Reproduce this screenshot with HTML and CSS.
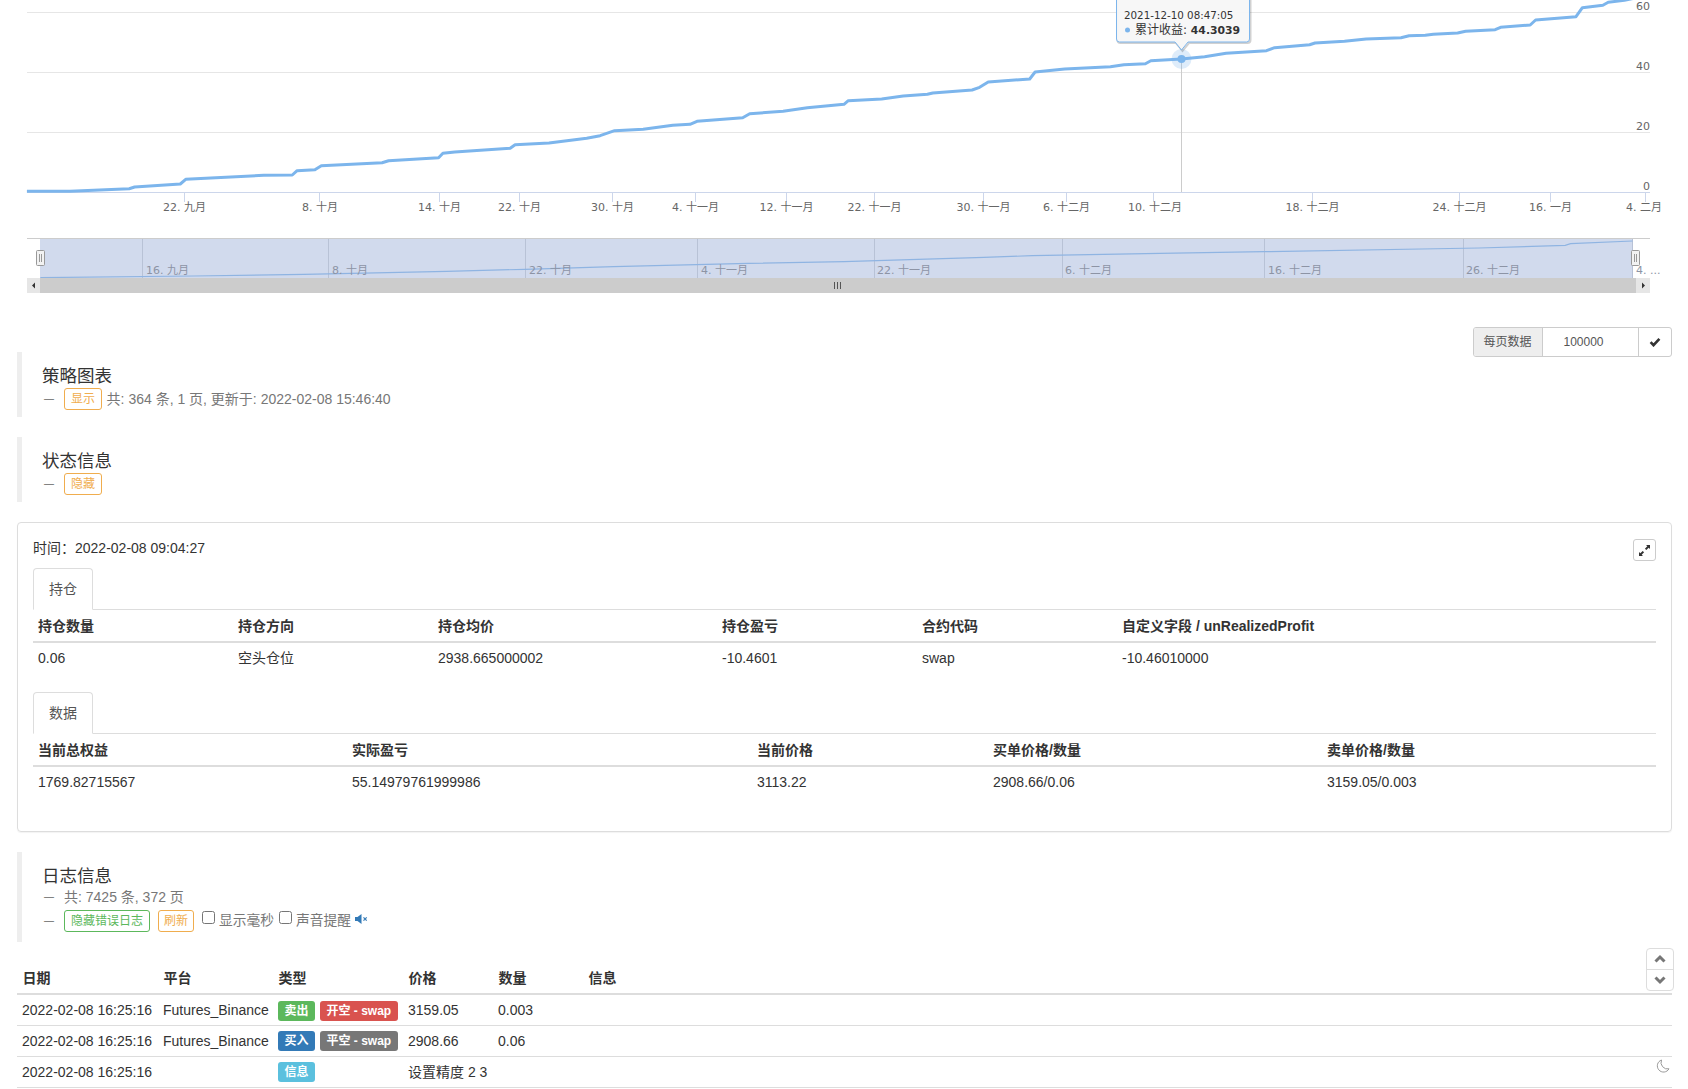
FILE: index.html
```html
<!DOCTYPE html>
<html lang="zh-CN">
<head>
<meta charset="utf-8">
<title>策略详情</title>
<link rel="stylesheet" href="styles.css">
</head>
<body>
<svg class="chart" width="1688" height="327" viewBox="0 0 1688 327" xmlns="http://www.w3.org/2000/svg">
  <g class="grid">
    <line x1="27" x2="1650" y1="12.5" y2="12.5"/>
    <line x1="27" x2="1650" y1="72.5" y2="72.5"/>
    <line x1="27" x2="1650" y1="132.5" y2="132.5"/>
  </g>
  <g class="axis">
    <line x1="27" x2="1650" y1="192.5" y2="192.5"/>
    <line x1="184.5" x2="184.5" y1="192" y2="202"/>
    <line x1="319.5" x2="319.5" y1="192" y2="202"/>
    <line x1="439.5" x2="439.5" y1="192" y2="202"/>
    <line x1="519.5" x2="519.5" y1="192" y2="202"/>
    <line x1="612.5" x2="612.5" y1="192" y2="202"/>
    <line x1="695.5" x2="695.5" y1="192" y2="202"/>
    <line x1="786.5" x2="786.5" y1="192" y2="202"/>
    <line x1="874.5" x2="874.5" y1="192" y2="202"/>
    <line x1="983.5" x2="983.5" y1="192" y2="202"/>
    <line x1="1066.5" x2="1066.5" y1="192" y2="202"/>
    <line x1="1153.5" x2="1153.5" y1="192" y2="202"/>
    <line x1="1312.5" x2="1312.5" y1="192" y2="202"/>
    <line x1="1459.5" x2="1459.5" y1="192" y2="202"/>
    <line x1="1550.5" x2="1550.5" y1="192" y2="202"/>
    <line x1="1645.5" x2="1645.5" y1="192" y2="202"/>
  </g>
  <g class="xlabels">
    <text x="184.5" y="211">22. 九月</text>
    <text x="320" y="211">8. 十月</text>
    <text x="439.5" y="211">14. 十月</text>
    <text x="519.5" y="211">22. 十月</text>
    <text x="612.5" y="211">30. 十月</text>
    <text x="695.5" y="211">4. 十一月</text>
    <text x="786.5" y="211">12. 十一月</text>
    <text x="874.5" y="211">22. 十一月</text>
    <text x="983.5" y="211">30. 十一月</text>
    <text x="1066.5" y="211">6. 十二月</text>
    <text x="1155" y="211">10. 十二月</text>
    <text x="1312.5" y="211">18. 十二月</text>
    <text x="1459.5" y="211">24. 十二月</text>
    <text x="1550.5" y="211">16. 一月</text>
    <text x="1644" y="211">4. 二月</text>
  </g>
  <g class="ylabels">
    <text x="1650" y="10">60</text>
    <text x="1650" y="70">40</text>
    <text x="1650" y="130">20</text>
    <text x="1650" y="190">0</text>
  </g>
  <line class="crosshair" x1="1181.5" x2="1181.5" y1="59" y2="192"/>
  <polyline class="series" points="26.9,191.3 70,191.3 129.2,188.7 134.6,187 180.3,184 185.7,179.3 263.7,175.3 292.3,175 297.1,170.7 314.9,169.7 321.3,165.7 382.1,162.7 388.6,160.7 438.6,157.7 442.9,153.3 454.8,152 510.2,148.3 515.1,144.7 549,143 586.7,138.3 600.1,135.7 614.6,130.7 643.2,129.3 672.8,125.3 690,124.3 697,121.3 742.7,117.7 749.7,113.7 783.1,111.3 807.3,107.7 844,104.3 848.3,100.7 881.7,99 903.2,96 927.4,94.3 932.8,93 972.1,90 979.6,87.3 988.2,82 1029.7,79 1035.1,72 1064.7,69 1110.4,66.7 1123.9,64.7 1145.4,63.7 1150.8,60.7 1181.5,59 1204.6,56.7 1226.1,53.3 1266.5,50.7 1274.6,47.7 1309.6,44.7 1315,43 1344.5,41.3 1366.1,39 1401,37.7 1409.1,35.7 1425.3,35.3 1433.3,34.3 1457.6,33 1465.6,31.3 1495.2,29.7 1500.6,27.3 1530.2,25 1535.6,20 1576,16.7 1582.4,7.7 1602.9,5.3 1608.2,2.3 1624.4,0.3 1640,-3"/>
  <circle class="halo" cx="1181.5" cy="59" r="10"/>
  <circle class="dot" cx="1181.5" cy="59" r="4"/>
  <path class="tip-shadow" d="M1116.5,-10 V39 a3,3 0 0 0 3,3 H1175 L1181.5,50 L1188,42 H1246.5 a3,3 0 0 0 3,-3 V-10 Z" transform="translate(1 1)"/>
  <path class="tip" d="M1116.5,-10 V39 a3,3 0 0 0 3,3 H1175 L1181.5,50 L1188,42 H1246.5 a3,3 0 0 0 3,-3 V-10 Z"/>
  <text class="tip-date" x="1124" y="18.5">2021-12-10 08:47:05</text>
  <circle class="tip-bullet" cx="1127.5" cy="30" r="2.5"/>
  <text class="tip-text" x="1135" y="34">累计收益: <tspan class="tip-val">44.3039</tspan></text>

  <line class="nav-edge" x1="27" x2="1650" y1="238.5" y2="238.5"/>
  <rect class="nav-mask" x="40" y="239" width="1593" height="39"/>
  <g class="nav-grid">
    <line x1="142.5" x2="142.5" y1="239" y2="278"/>
    <line x1="328.5" x2="328.5" y1="239" y2="278"/>
    <line x1="525.5" x2="525.5" y1="239" y2="278"/>
    <line x1="697.5" x2="697.5" y1="239" y2="278"/>
    <line x1="874.5" x2="874.5" y1="239" y2="278"/>
    <line x1="1062.5" x2="1062.5" y1="239" y2="278"/>
    <line x1="1264.5" x2="1264.5" y1="239" y2="278"/>
    <line x1="1463.5" x2="1463.5" y1="239" y2="278"/>
    <line x1="1632.5" x2="1632.5" y1="239" y2="278"/>
  </g>
  <polyline class="nav-series" points="40.4,277.7 193.8,276 304,274.3 446.7,271.3 524.8,269.3 613.6,266.7 748.1,263.3 844,261.7 983.9,257.3 1032.4,255.7 1145.4,253.7 1263.8,251.7 1479,248 1565.2,245.3 1570.6,243.7 1632.5,241"/>
  <g class="nav-labels">
    <text x="146" y="274">16. 九月</text>
    <text x="332" y="274">8. 十月</text>
    <text x="529" y="274">22. 十月</text>
    <text x="701" y="274">4. 十一月</text>
    <text x="877" y="274">22. 十一月</text>
    <text x="1065" y="274">6. 十二月</text>
    <text x="1268" y="274">16. 十二月</text>
    <text x="1466" y="274">26. 十二月</text>
    <text x="1636" y="274">4. ...</text>
  </g>
  <rect class="handle" x="36.5" y="250.5" width="8" height="15" rx="1"/>
  <path class="handle-grip" d="M39.5,254 V262 M41.5,254 V262"/>
  <rect class="handle" x="1631.5" y="250.5" width="8" height="15" rx="1"/>
  <path class="handle-grip" d="M1634.5,254 V262 M1636.5,254 V262"/>
  <rect class="bar" x="40" y="278" width="1596" height="15"/>
  <rect class="bar-btn" x="27" y="278" width="13" height="15"/>
  <rect class="bar-btn" x="1636" y="278" width="14" height="15"/>
  <path class="bar-arrow" d="M35,282.5 V288.5 L32,285.5 Z M1642,282.5 V288.5 L1645,285.5 Z"/>
  <path class="bar-grip" d="M834.5,282 V289 M837.5,282 V289 M840.5,282 V289"/>
</svg>

<main class="content">
  <div class="toolbar">
    <div class="pager">
      <span class="pager-label">每页数据</span>
      <span class="pager-value">100000</span>
      <span class="pager-btn">
        <svg width="12" height="10" viewBox="0 0 12 10" xmlns="http://www.w3.org/2000/svg"><path class="icon-dark" d="M1.6,5.2 L4.5,8.2 L10.4,1.8" /></svg>
      </span>
    </div>
  </div>

  <section class="note">
    <h4 class="note-title">策略图表</h4>
    <div class="meta">
      <span class="dash">—</span><span class="tag tag-orange">显示</span><span class="meta-text">共: 364 条, 1 页, 更新于: 2022-02-08 15:46:40</span>
    </div>
  </section>

  <section class="note">
    <h4 class="note-title">状态信息</h4>
    <div class="meta">
      <span class="dash">—</span><span class="tag tag-orange">隐藏</span>
    </div>
  </section>

  <section class="panel">
    <div class="panel-head">
      <span>时间：2022-02-08 09:04:27</span>
      <span class="expand">
        <svg width="13" height="13" viewBox="0 0 13 13" xmlns="http://www.w3.org/2000/svg"><path class="icon-fill" d="M8,1 H12 V5 L10.7,3.7 L8.3,6.1 L6.9,4.7 L9.3,2.3 Z M5,12 H1 V8 L2.3,9.3 L4.7,6.9 L6.1,8.3 L3.7,10.7 Z"/></svg>
      </span>
    </div>

    <div class="tabbar"><span class="tab">持仓</span></div>
    <table class="data">
      <colgroup><col class="p1"><col class="p1"><col class="p3"><col class="p1"><col class="p1"><col></colgroup>
      <thead><tr><th>持仓数量</th><th>持仓方向</th><th>持仓均价</th><th>持仓盈亏</th><th>合约代码</th><th>自定义字段 / unRealizedProfit</th></tr></thead>
      <tbody><tr><td>0.06</td><td>空头仓位</td><td>2938.665000002</td><td>-10.4601</td><td>swap</td><td>-10.46010000</td></tr></tbody>
    </table>

    <div class="tabbar second"><span class="tab">数据</span></div>
    <table class="data">
      <colgroup><col class="d1"><col class="d2"><col class="d3"><col class="d4"><col></colgroup>
      <thead><tr><th>当前总权益</th><th>实际盈亏</th><th>当前价格</th><th>买单价格/数量</th><th>卖单价格/数量</th></tr></thead>
      <tbody><tr><td>1769.82715567</td><td>55.14979761999986</td><td>3113.22</td><td>2908.66/0.06</td><td>3159.05/0.003</td></tr></tbody>
    </table>
  </section>

  <section class="note logs">
    <h4 class="note-title">日志信息</h4>
    <div class="meta"><span class="dash">—</span><span class="meta-plain">共: 7425 条, 372 页</span></div>
    <div class="meta">
      <span class="dash">—</span><span class="tag tag-green">隐藏错误日志</span><span class="tag tag-orange tag-narrow">刷新</span>
      <input class="check" type="checkbox"><span class="check-text">显示毫秒</span>
      <input class="check" type="checkbox"><span class="check-text">声音提醒</span>
      <svg class="mute" width="13" height="10" viewBox="0 0 13 10" xmlns="http://www.w3.org/2000/svg"><path class="icon-blue" d="M0,3 H2.5 L6.5,0 V10 L2.5,7 H0 Z"/><path class="icon-blue-line" d="M8.5,3.4 L11.7,6.6 M11.7,3.4 L8.5,6.6"/></svg>
    </div>
  </section>

  <table class="log">
    <colgroup><col class="l1"><col class="l2"><col class="l3"><col class="l4"><col class="l4"><col></colgroup>
    <thead><tr><th>日期</th><th>平台</th><th>类型</th><th>价格</th><th>数量</th><th>信息</th></tr></thead>
    <tbody>
      <tr><td>2022-02-08 16:25:16</td><td>Futures_Binance</td><td><span class="badge green">卖出</span><span class="badge red">开空 - swap</span></td><td>3159.05</td><td>0.003</td><td></td></tr>
      <tr><td>2022-02-08 16:25:16</td><td>Futures_Binance</td><td><span class="badge blue">买入</span><span class="badge grey">平空 - swap</span></td><td>2908.66</td><td>0.06</td><td></td></tr>
      <tr><td>2022-02-08 16:25:16</td><td></td><td><span class="badge cyan">信息</span></td><td colspan="2">设置精度 2 3</td><td></td></tr>
    </tbody>
  </table>
</main>

<div class="scroller">
  <span class="scroller-btn">
    <svg width="14" height="10" viewBox="0 0 14 10" xmlns="http://www.w3.org/2000/svg"><path class="chev" d="M2.5,7.5 L7,3 L11.5,7.5"/></svg>
  </span>
  <span class="scroller-btn">
    <svg width="14" height="10" viewBox="0 0 14 10" xmlns="http://www.w3.org/2000/svg"><path class="chev" d="M2.5,2.5 L7,7 L11.5,2.5"/></svg>
  </span>
</div>
<svg class="moon" width="14" height="14" viewBox="0 0 14 14" xmlns="http://www.w3.org/2000/svg"><path class="moon-line" d="M5.5,1 A6.2,6.2 0 1 0 13,9.8 A6.5,6.5 0 0 1 5.5,1 Z"/></svg>
</body>
</html>
```
FILE: styles.css
```css
* { box-sizing: border-box; }
html, body { margin: 0; padding: 0; background: #fff; }
body {
  font-family: "Liberation Sans", "Noto Sans CJK SC", sans-serif;
  font-size: 14px;
  line-height: 20px;
  color: #333;
  position: relative;
  min-height: 1089px;
  overflow: hidden;
}

/* chart */
.chart { display: block; font-family: "DejaVu Sans", "Noto Sans CJK SC", sans-serif; font-size: 11px; }
.grid line { stroke: #e6e6e6; stroke-width: 1; }
.axis line { stroke: #ccd6eb; stroke-width: 1; }
.xlabels text { fill: #666; text-anchor: middle; }
.ylabels text { fill: #666; text-anchor: end; }
.crosshair { stroke: #ccc; stroke-width: 1; }
.series { fill: none; stroke: #7cb5ec; stroke-width: 3; stroke-linejoin: round; }
.halo { fill: #7cb5ec; fill-opacity: .25; }
.dot { fill: #7cb5ec; }
.tip { fill: #f7f7f7; fill-opacity: .95; stroke: #7cb5ec; stroke-width: 1; }
.tip-shadow { fill: none; stroke: #000; stroke-opacity: .18; stroke-width: 2; }
.tip-date { font-size: 10.3px; fill: #333; }
.tip-text { font-size: 12px; fill: #333; }
.tip-val { font-weight: 700; font-size: 10.8px; }
.tip-bullet { fill: #7cb5ec; }
.nav-edge { stroke: #ccc; stroke-width: 1; }
.nav-mask { fill: #d1daed; }
.nav-grid line { stroke: #b8c2d6; stroke-width: 1; }
.nav-series { fill: none; stroke: #8fb4e2; stroke-width: 1.2; }
.nav-labels text { fill: #8d94a5; }
.handle { fill: #f2f2f2; stroke: #999; stroke-width: 1; }
.handle-grip { fill: none; stroke: #999; stroke-width: 1; }
.bar { fill: #ccc; }
.bar-btn { fill: #e6e6e6; }
.bar-arrow { fill: #333; }
.bar-grip { fill: none; stroke: #555; stroke-width: 1; }

/* main */
.content { padding: 0 16.5px 0 17px; }

.toolbar { display: flex; justify-content: flex-end; align-items: flex-start; height: 25px; }
.pager {
  position: relative;
  display: flex;
  width: 199px;
  height: 30px;
  flex: none;
  border: 1px solid #ccc;
  border-radius: 3px;
  font-size: 12px;
  line-height: 28px;
  background: #fff;
}
.pager-label { width: 69px; flex: none; padding-left: 10px; background: #eee; color: #555; border-right: 1px solid #ccc; border-radius: 2px 0 0 2px; }
.pager-value { flex: 1; padding-left: 21px; color: #555; }
.pager-btn { width: 33px; flex: none; display: flex; align-items: center; justify-content: center; border-left: 1px solid #ccc; }
.icon-dark { fill: none; stroke: #333; stroke-width: 2.6; }

.note { border-left: 5px solid #eee; padding: 14px 0 0 20px; margin-bottom: 20px; height: 65px; }
.note.logs { height: 90px; margin-top: 20px; margin-bottom: 20px; }
.note-title { margin: 0 0 2px; font-size: 17.5px; line-height: 20px; font-weight: 400; color: #333; }
.logs .note-title { margin-bottom: 0; }
.meta { display: flex; align-items: center; height: 22px; color: #777; }
.logs .meta + .meta { margin-top: 2px; }
.dash { width: 10px; margin: 0 10px 0 2px; font-size: 10px; color: #666; font-family: "Liberation Sans", sans-serif; }
.tag { height: 22px; padding: 0 6px; border: 1px solid; border-radius: 3px; font-size: 12px; line-height: 20px; white-space: nowrap; }
.tag-orange { color: #f0ad4e; border-color: #f0ad4e; }
.tag-green { color: #5cb85c; border-color: #5cb85c; margin-right: 8px; }
.tag-narrow { padding: 0 5px; }
.meta-text { margin-left: 4.6px; }
.check { width: 13px; height: 13px; margin: -7px 4px 0 8px; flex: none; }
.check + .check-text + .check { margin-left: 5px; }
.check-text { color: #777; font-size: 13.75px; }
.mute { margin-left: 4px; margin-top: -4px; }
.icon-blue { fill: #337ab7; }
.icon-blue-line { fill: none; stroke: #337ab7; stroke-width: 1.2; }

.panel {
  position: relative;
  height: 310px;
  padding: 15px;
  border: 1px solid #ddd;
  border-radius: 4px;
  box-shadow: 0 1px 1px rgba(0, 0, 0, .05);
}
.panel-head { display: flex; justify-content: space-between; align-items: flex-start; height: 20px; margin-bottom: 10px; }
.expand {
  display: flex; align-items: center; justify-content: center;
  width: 23px; height: 22px; margin-top: 1px;
  border: 1px solid #ccc; border-radius: 3px;
}
.icon-fill { fill: #333; }
.tabbar { height: 42px; border-bottom: 1px solid #ddd; }
.tabbar.second { margin-top: 20px; }
.tab {
  display: block; width: 60px; height: 42px;
  border: 1px solid #ddd; border-bottom-color: #fff; border-radius: 4px 4px 0 0;
  text-align: center; line-height: 40px; color: #555; background: #fff;
}

table { border-collapse: collapse; table-layout: fixed; width: 100%; }
th { text-align: left; font-weight: 700; padding: 0 5px; height: 32px; border-bottom: 2px solid #ddd; white-space: nowrap; }
td { padding: 0 5px; height: 30px; white-space: nowrap; }
.p1 { width: 200px; }
.p3 { width: 284px; }
.d1 { width: 314px; }
.d2 { width: 405px; }
.d3 { width: 236px; }
.d4 { width: 334px; }

.log th { padding-left: 5.6px; }
.log td { padding-left: 5px; height: 31px; border-bottom: 1px solid #ddd; }
.l1 { width: 141px; }
.l2 { width: 115px; }
.l3 { width: 130px; }
.l4 { width: 90px; }
.badge {
  display: inline-block; vertical-align: middle;
  height: 20px; padding: 0 6.5px; margin: 1px 5px 0 0;
  border-radius: 3px; color: #fff; font-size: 12px; font-weight: 700; line-height: 20px;
}
.green { background: #5cb85c; }
.red { background: #d9534f; }
.blue { background: #337ab7; }
.grey { background: #777; }
.cyan { background: #5bc0de; }

.scroller {
  position: absolute; left: 1646px; top: 948px;
  width: 28px; height: 43px;
  display: flex; flex-direction: column;
  border: 1px solid #ddd; border-radius: 4px; background: #fff;
}
.scroller-btn { flex: 1; display: flex; align-items: center; justify-content: center; }
.scroller-btn + .scroller-btn { border-top: 1px solid #ddd; }
.chev { fill: none; stroke: #777; stroke-width: 3; }
.moon { position: absolute; left: 1656px; top: 1059px; }
.moon-line { fill: none; stroke: #999; stroke-width: 1; }
```
